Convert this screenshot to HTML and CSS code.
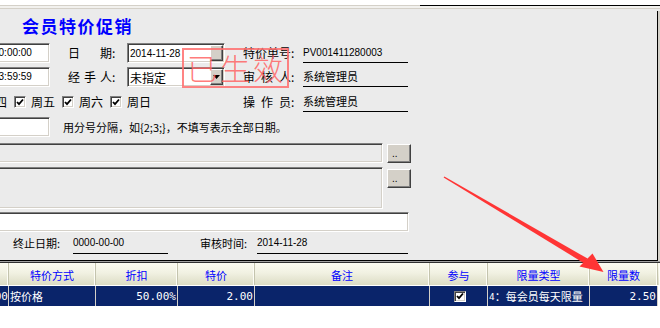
FILE: index.html
```html
<!DOCTYPE html>
<html lang="zh-CN">
<head>
<meta charset="utf-8">
<title>会员特价促销</title>
<link rel="stylesheet" href="styles.css">
</head>
<body>
<div class="window">
  <div class="top-strip"><div class="top-line"></div></div>
  <div class="panel">
    <div class="title"><span class="title-text">会员特价促销</span></div>

    <div class="row">
      <div class="left">
        <div class="field time num">00:00:00</div>
        <div class="label-l"><span class="lbl">日期</span>:</div>
        <div class="combo">
          <span class="ctext num">2014-11-28</span>
          <span class="drop"></span>
        </div>
      </div>
      <div class="label-r"><span class="lbl">特价单号</span>:</div>
      <div class="value num">PV001411280003</div>
    </div>

    <div class="row row-b">
      <div class="left">
        <div class="field time num">23:59:59</div>
        <div class="label-l"><span class="lbl">经手人</span>:</div>
        <div class="combo">
          <span class="ctext">未指定</span>
          <span class="drop"><svg width="7" height="4" viewBox="0 0 7 4"><polygon points="0,0 7,0 3.5,4" fill="#000"/></svg></span>
        </div>
      </div>
      <div class="label-r"><span class="lbl">审核人</span>:</div>
      <div class="value cn">系统管理员</div>
    </div>

    <div class="row row-c">
      <div class="left">
        <span class="day first">周四</span>
        <span class="chk-item"><span class="chk"><svg width="8" height="8" viewBox="0 0 8 8"><path d="M1 4 L3 6.2 L7 1.5" fill="none" stroke="#000" stroke-width="1.8"/></svg></span><span class="day">周五</span></span>
        <span class="chk-item"><span class="chk"><svg width="8" height="8" viewBox="0 0 8 8"><path d="M1 4 L3 6.2 L7 1.5" fill="none" stroke="#000" stroke-width="1.8"/></svg></span><span class="day">周六</span></span>
        <span class="chk-item"><span class="chk"><svg width="8" height="8" viewBox="0 0 8 8"><path d="M1 4 L3 6.2 L7 1.5" fill="none" stroke="#000" stroke-width="1.8"/></svg></span><span class="day">周日</span></span>
      </div>
      <div class="label-r"><span class="lbl">操作员</span>:</div>
      <div class="value cn">系统管理员</div>
    </div>

    <div class="row row-d">
      <div class="field short"></div>
      <div class="note">用分号分隔，如{2;3;}，不填写表示全部日期。</div>
    </div>

    <div class="row row-e">
      <div class="field wide grey"></div>
      <div class="btn">..</div>
    </div>

    <div class="row row-f">
      <div class="field wide tall grey"></div>
      <div class="btn">..</div>
    </div>

    <div class="row row-g">
      <div class="field full"></div>
    </div>

    <div class="row row-h">
      <div class="label-b first">终止日期:</div>
      <div class="value-b num narrow">0000-00-00</div>
      <div class="label-b second">审核时间:</div>
      <div class="value-b num broad">2014-11-28</div>
    </div>
  </div>

  <div class="sep"></div>

  <div class="grid-head">
    <div class="c c0"></div>
    <div class="c c1">特价方式</div>
    <div class="c c2">折扣</div>
    <div class="c c3">特价</div>
    <div class="c c4">备注</div>
    <div class="c c5">参与</div>
    <div class="c c6">限量类型</div>
    <div class="c c7">限量数</div>
    <div class="c c8"></div>
  </div>
  <div class="grid-row">
    <div class="c c0 r mono clip">0.00</div>
    <div class="c c1 l">按价格</div>
    <div class="c c2 r mono">50.00%</div>
    <div class="c c3 r mono">2.00</div>
    <div class="c c4"></div>
    <div class="c c5 m"><span class="chk small"><svg width="8" height="8" viewBox="0 0 8 8"><path d="M1 4 L3 6.2 L7 1.5" fill="none" stroke="#000" stroke-width="1.8"/></svg></span></div>
    <div class="c c6 l"><span class="mono">4</span>：每会员每天限量</div>
    <div class="c c7 r mono">2.50</div>
    <div class="c c8 blank"></div>
  </div>

  <div class="stamp">已生效</div>

  <svg class="arrow" width="660" height="328" viewBox="0 0 660 328">
    <polygon points="443.6,177.6 444.4,176.4 587.6,258.6 584.4,263.4" fill="#ff3535"/>
    <polygon points="579.5,266.5 592.5,253.5 603.5,272" fill="#ff3535"/>
  </svg>
</div>
</body>
</html>
```

FILE: styles.css
```css
* { box-sizing: border-box; }
html, body { margin: 0; padding: 0; }
body {
  background: #fff;
  font-family: "Noto Sans CJK SC", "Noto Sans", sans-serif;
  font-size: 12px;
  color: #000;
}
.window {
  position: relative;
  width: 660px;
  height: 328px;
  overflow: hidden;
  background: #fff;
}
.top-strip {
  height: 6px;
  background: linear-gradient(to bottom, #d4d0c8 0 1px, #f2f1ee 1px 3px, #d4d0c8 3px 4px, #ebebeb 4px 6px);
}
.top-line {
  height: 1px;
  margin-top: 5px;
  margin-left: 420px;
  background: #000;
}
.panel {
  width: 658px;
  height: 250px;
  background: #ebebeb;
  border-right: 1px solid #000;
  border-bottom: 1px solid #000;
  box-shadow: 2px 0 0 #d4d0c8;
}
.title {
  height: 32px;
  padding-left: 22px;
  display: flex;
  align-items: center;
}
.title-text {
  display: block;
  width: 112px;
  font-size: 17px;
  line-height: 22px;
  font-weight: bold;
  letter-spacing: 1.5px;
  color: #0000ff;
  white-space: nowrap;
  margin-top: -2px;
}
.row {
  display: flex;
  align-items: center;
  height: 20px;
}
.row-b { margin-top: 4px; }
.row-c { margin-top: 5px; }
.row-d { margin-top: 5px; }
.row-e { margin-top: 6px; }
.row-f { margin-top: 4px; height: 42px; align-items: flex-start; }
.row-g { margin-top: 3px; }
.row-h { height: 28px; align-items: flex-start; padding-top: 1px; }

.num { font-family: "Liberation Sans", Arial, sans-serif; font-size: 10px; }
.mono { font-family: "DejaVu Sans Mono", monospace; font-size: 9.4px; }

.left {
  width: 243px;
  height: 20px;
  display: flex;
  align-items: center;
}
.field {
  height: 20px;
  background: #fff;
  border: 1px solid;
  border-color: #808080 #fff #fff #808080;
  box-shadow: inset 1px 1px #404040, inset -1px -1px #d4d0c8;
  line-height: 18px;
  white-space: nowrap;
  overflow: hidden;
}
.field.time {
  margin-left: -10px;
  width: 60px;
  padding-left: 2px;
}
.field.short { margin-left: -10px; width: 60px; }
.field.wide { margin-left: -10px; width: 393px; }
.field.tall { height: 42px; }
.field.full { margin-left: -10px; width: 419px; }
.field.grey { background: #ebebeb; }

.label-l {
  margin-left: 18px;
  width: 59px;
  display: flex;
  align-items: center;
  line-height: 20px;
}
.label-r {
  width: 60px;
  display: flex;
  align-items: center;
  line-height: 20px;
}
.lbl {
  display: inline-block;
  width: 44px;
  text-align: justify;
  text-align-last: justify;
}
.label-r .lbl { width: 48px; }

.combo {
  width: 98px;
  height: 20px;
  display: flex;
  background: #fff;
  border: 1px solid;
  border-color: #808080 #fff #fff #808080;
  box-shadow: inset 1px 1px #404040, inset -1px -1px #d4d0c8;
  padding: 1px;
}
.ctext {
  flex: 1;
  padding-left: 1px;
  line-height: 17px;
  white-space: nowrap;
}
.drop {
  width: 13px;
  height: 16px;
  background: #d4d0c8;
  border: 1px solid;
  border-color: #fff #404040 #404040 #fff;
  box-shadow: inset -1px -1px #808080;
  display: flex;
  align-items: center;
  justify-content: center;
}
.value {
  width: 105px;
  height: 20px;
  line-height: 19px;
  border-bottom: 1px solid #000;
  white-space: nowrap;
}
.value.cn { font-size: 11px; }

.day { font-size: 12px; line-height: 20px; white-space: nowrap; }
.day.first { margin-left: -17px; }
.chk-item {
  display: flex;
  align-items: center;
  gap: 5px;
  margin-left: 7px;
}
.chk {
  width: 12px;
  height: 12px;
  background: #fff;
  border: 1px solid;
  border-color: #808080 #fff #fff #808080;
  box-shadow: inset 1px 1px #404040, inset -1px -1px #d4d0c8;
  display: flex;
  align-items: center;
  justify-content: center;
}
.chk.small { width: 12px; height: 11px; }

.note {
  margin-left: 13px;
  font-size: 11px;
  line-height: 20px;
  white-space: nowrap;
}
.btn {
  margin-left: 4px;
  width: 24px;
  height: 19px;
  background: #d4d0c8;
  border: 1px solid;
  border-color: #fff #404040 #404040 #fff;
  box-shadow: inset -1px -1px #808080;
  font-family: "Liberation Sans", Arial, sans-serif;
  font-size: 10px;
  line-height: 18px;
  padding-left: 4px;
}
.row-f .btn { margin-top: 2px; }

.label-b {
  font-size: 11px;
  line-height: 20px;
  white-space: nowrap;
}
.label-b.first { margin-left: 13px; width: 60px; }
.label-b.second { margin-left: 32px; width: 57px; }
.value-b {
  height: 21px;
  line-height: 20px;
  border-bottom: 1px solid #000;
}
.value-b.narrow { width: 95px; }
.value-b.broad { width: 151px; }

.sep {
  height: 2px;
  background: linear-gradient(to bottom, #a0a0a0 0 1px, #303030 1px 2px);
}

.grid-head, .grid-row { display: flex; }
.grid-head {
  height: 23px;
  border-bottom: 1px solid #fff;
  background: linear-gradient(to bottom, #fbfbf1 0%, #f1f1e2 45%, #dcdcc4 100%);
}
.grid-row { height: 20px; }
.c {
  height: 100%;
  border-right: 1px solid #c4c4ae;
  display: flex;
  align-items: center;
  white-space: nowrap;
  overflow: hidden;
  font-size: 11px;
}
.grid-head .c {
  justify-content: center;
  color: #0000ff;
  box-shadow: inset -1px 0 #fdfdf6;
  padding-top: 1px;
}
.grid-row .c {
  background: #0a246a;
  color: #fff;
  border-right-color: #d4d0c8;
}
.grid-row .c.blank { background: #fff; border-right: 0; }
.c0 { width: 9px; }
.c1 { width: 87px; }
.c2 { width: 82px; }
.c3 { width: 77px; }
.c4 { width: 175px; }
.c5 { width: 58px; }
.c6 { width: 102px; }
.c7 { width: 68px; }
.c8 { width: 2px; border-right: 0; }
.grid-row .r { justify-content: flex-end; padding-right: 1px; }
.grid-row .l { justify-content: flex-start; padding-left: 1px; }
.grid-row .m { justify-content: center; padding-left: 2px; }
.grid-row .clip { padding-right: 0; }

.stamp {
  position: absolute;
  left: 182px;
  top: 48px;
  width: 107px;
  height: 40px;
  border: 2px solid rgba(255, 110, 110, 0.85);
  color: rgba(255, 100, 100, 0.85);
  font-size: 30px;
  font-weight: 300;
  line-height: 35px;
  letter-spacing: 3px;
  padding-left: 3px;
  white-space: nowrap;
  overflow: hidden;
}
.arrow {
  position: absolute;
  left: 0;
  top: 0;
  pointer-events: none;
}
```
